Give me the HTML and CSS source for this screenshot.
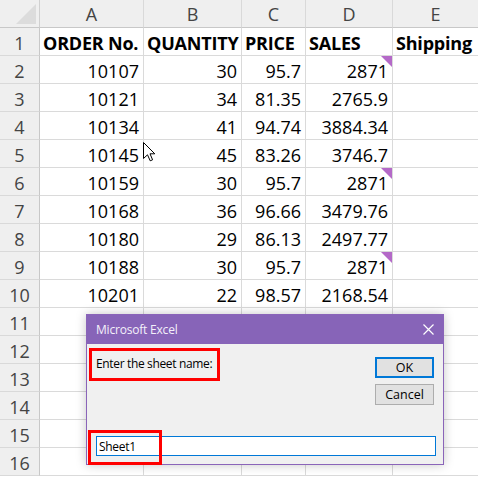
FILE: index.html
```html
<!DOCTYPE html>
<html>
<head>
<meta charset="utf-8">
<link rel="stylesheet" href="styles.css">
</head>
<body>
<div class="sheet">
  <div class="corner"><span class="tri"></span></div>
  <div class="ch">A</div><div class="ch">B</div><div class="ch">C</div><div class="ch">D</div><div class="ch">E</div>

  <div class="rh">1</div>
  <div class="c b">ORDER No.</div><div class="c b">QUANTITY</div><div class="c b">PRICE</div><div class="c b">SALES</div><div class="c b">Shipping</div>

  <div class="rh">2</div>
  <div class="c n">10107</div><div class="c n">30</div><div class="c n">95.7</div><div class="c n">2871<span class="cm"></span></div><div class="c"></div>
  <div class="rh">3</div>
  <div class="c n">10121</div><div class="c n">34</div><div class="c n">81.35</div><div class="c n">2765.9</div><div class="c"></div>
  <div class="rh">4</div>
  <div class="c n">10134</div><div class="c n">41</div><div class="c n">94.74</div><div class="c n">3884.34</div><div class="c"></div>
  <div class="rh">5</div>
  <div class="c n">10145</div><div class="c n">45</div><div class="c n">83.26</div><div class="c n">3746.7</div><div class="c"></div>
  <div class="rh">6</div>
  <div class="c n">10159</div><div class="c n">30</div><div class="c n">95.7</div><div class="c n">2871<span class="cm"></span></div><div class="c"></div>
  <div class="rh">7</div>
  <div class="c n">10168</div><div class="c n">36</div><div class="c n">96.66</div><div class="c n">3479.76</div><div class="c"></div>
  <div class="rh">8</div>
  <div class="c n">10180</div><div class="c n">29</div><div class="c n">86.13</div><div class="c n">2497.77</div><div class="c"></div>
  <div class="rh">9</div>
  <div class="c n">10188</div><div class="c n">30</div><div class="c n">95.7</div><div class="c n">2871<span class="cm"></span></div><div class="c"></div>
  <div class="rh">10</div>
  <div class="c n">10201</div><div class="c n">22</div><div class="c n">98.57</div><div class="c n">2168.54</div><div class="c"></div>
  <div class="rh">11</div><div class="c"></div><div class="c"></div><div class="c"></div><div class="c"></div><div class="c"></div>
  <div class="rh">12</div><div class="c"></div><div class="c"></div><div class="c"></div><div class="c"></div><div class="c"></div>
  <div class="rh">13</div><div class="c"></div><div class="c"></div><div class="c"></div><div class="c"></div><div class="c"></div>
  <div class="rh">14</div><div class="c"></div><div class="c"></div><div class="c"></div><div class="c"></div><div class="c"></div>
  <div class="rh">15</div><div class="c"></div><div class="c"></div><div class="c"></div><div class="c"></div><div class="c"></div>
  <div class="rh">16</div><div class="c"></div><div class="c"></div><div class="c"></div><div class="c"></div><div class="c"></div>
</div>

<svg class="cursor" width="13" height="20" viewBox="0 0 13 20">
  <path d="M0.5 0.5 L0.5 16.5 L4.5 12.8 L7.2 18.8 L9.6 17.8 L7 11.8 L11.8 11.8 Z" fill="#fff" stroke="#000" stroke-width="1" stroke-linejoin="miter"/>
</svg>

<div class="dialog">
  <div class="titlebar">
    <span class="title">Microsoft Excel</span>
    <svg class="close" width="11" height="11" viewBox="0 0 11 11"><path d="M0.5 0.5 L10.5 10.5 M10.5 0.5 L0.5 10.5" stroke="#fff" stroke-width="1.2"/></svg>
  </div>
  <div class="dbody">
    <div class="toprow">
      <div class="label">Enter the sheet name:</div>
      <div class="buttons">
        <div class="btn ok">OK</div>
        <div class="btn">Cancel</div>
      </div>
    </div>
    <div class="input">Sheet1</div>
  </div>
  <div class="mark mark1"></div>
  <div class="mark mark2"></div>
</div>
</body>
</html>
```

FILE: styles.css
```css
html, body {
  margin: 0;
  padding: 0;
  background: #fff;
  overflow: hidden;
  width: 478px;
  height: 478px;
}
body {
  font-family: "Open Sans", "Noto Sans", sans-serif;
  position: relative;
}
.sheet {
  display: grid;
  grid-template-columns: 40px 104px 98px 64px 87px 86px;
  grid-template-rows: 28px;
  grid-auto-rows: 28px;
}
.corner, .ch, .rh {
  background: #efefef;
  box-sizing: border-box;
}
.corner {
  position: relative;
  border-right: 1px solid #d0d0d0;
  border-bottom: 1px solid #c8c8c8;
}
.tri {
  position: absolute;
  left: 16px;
  top: 4px;
  width: 0;
  height: 0;
  border-left: 20px solid transparent;
  border-bottom: 20px solid #dcdcdc;
}
.ch {
  border-right: 1px solid #d9d9d9;
  border-bottom: 1px solid #c8c8c8;
  color: #444;
  font-size: 18px;
  display: flex;
  align-items: center;
  justify-content: center;
  padding-top: 1px;
}
.rh {
  border-right: 1px solid #c8c8c8;
  border-bottom: 1px solid #d9d9d9;
  color: #444;
  font-size: 18px;
  display: flex;
  align-items: center;
  justify-content: center;
  padding-top: 2px;
}
.c {
  box-sizing: border-box;
  border-right: 1px solid #dadada;
  border-bottom: 1px solid #dadada;
  font-size: 18px;
  color: #000;
  display: flex;
  align-items: center;
  padding: 2px 3px 0 3px;
  white-space: nowrap;
  position: relative;
}
.c.n {
  justify-content: flex-end;
  padding-right: 4px;
}
.c.b {
  font-weight: 700;
  letter-spacing: -0.2px;
}
.cm {
  position: absolute;
  top: 0;
  right: 0;
  width: 0;
  height: 0;
  border-top: 11px solid #b469c8;
  border-left: 11px solid transparent;
}
.cursor {
  position: absolute;
  left: 143px;
  top: 142px;
}
.dialog {
  position: absolute;
  left: 86px;
  top: 314px;
  width: 358px;
  height: 151px;
  box-sizing: border-box;
  border: 1px solid #8a64b9;
  background: #f0f0f0;
  box-shadow: 0 0 10px rgba(0, 0, 0, 0.22);
  display: flex;
  flex-direction: column;
  font-family: "Open Sans", "Noto Sans", sans-serif;
}
.titlebar {
  height: 29px;
  background: #8764b8;
  display: flex;
  align-items: center;
  justify-content: space-between;
  padding: 0 9px 0 9px;
  color: #fff;
}
.title {
  font-size: 12px;
  letter-spacing: -0.2px;
  color: #f4f0fa;
}
.dbody {
  flex: 1;
  display: flex;
  flex-direction: column;
  justify-content: space-between;
  padding: 13px 7px 8px 9px;
}
.toprow {
  display: flex;
  justify-content: space-between;
  align-items: flex-start;
}
.label {
  font-size: 12px;
  line-height: 16px;
  color: #000;
  margin-top: -1px;
  letter-spacing: -0.35px;
}
.buttons {
  display: flex;
  flex-direction: column;
  gap: 6px;
  margin-right: 2px;
}
.btn {
  width: 59px;
  height: 21px;
  box-sizing: border-box;
  border: 1px solid #adadad;
  background: #e1e1e1;
  font-size: 12.5px;
  color: #000;
  display: flex;
  align-items: center;
  justify-content: center;
}
.btn.ok {
  border: 2px solid #0078d7;
}
.input {
  height: 20px;
  box-sizing: border-box;
  border: 1px solid #0078d7;
  background: #fff;
  font-size: 12px;
  color: #000;
  padding-left: 2px;
  display: flex;
  align-items: center;
  letter-spacing: -0.3px;
}
.mark {
  position: absolute;
  border: 3px solid #ff0000;
  box-sizing: border-box;
}
.mark1 {
  left: 2px;
  top: 33px;
  width: 131px;
  height: 33px;
}
.mark2 {
  left: 1px;
  top: 115px;
  width: 74px;
  height: 35px;
}
```
